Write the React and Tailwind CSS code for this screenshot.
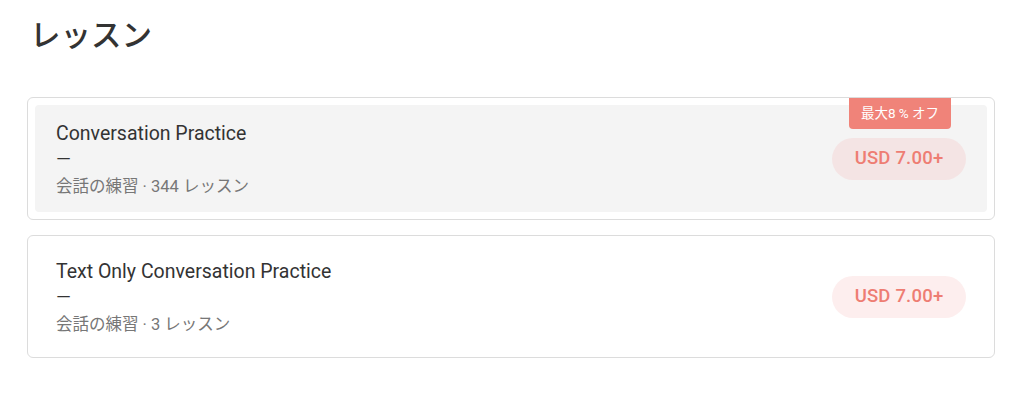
import React from 'react';

const lessons = [
  { title: 'Conversation Practice', category: '会話の練習', count: 344, price: 'USD 7.00+', discount: '最大8 % オフ', hovered: true },
  { title: 'Text Only Conversation Practice', category: '会話の練習', count: 3, price: 'USD 7.00+' },
];

const LessonCard = ({ lesson }) => (
  <div className="relative rounded-md border border-[#dcdcdc] bg-white p-[7px]">
    {lesson.discount && (
      <div className="absolute top-0 right-[43px] flex h-[31px] w-[102px] items-center justify-center rounded-b bg-[#f08379] text-[13.5px] text-white">
        {lesson.discount}
      </div>
    )}
    <div
      className={`flex h-[107px] items-center justify-between rounded px-[21px] ${
        lesson.hovered ? 'bg-[#f4f4f4]' : 'bg-white'
      }`}
    >
      <div className="flex flex-col pt-[4px]">
        <p className="text-[19.5px] leading-[26px] text-[#333]">{lesson.title}</p>
        <p className="text-[19px] leading-[24px] text-[#333]">—</p>
        <p className="mt-[3px] text-[16.5px] leading-[26px] text-[#777]">
          {lesson.category} · {lesson.count} レッスン
        </p>
      </div>
      <div
        className={`flex h-[42px] w-[134px] items-center justify-center rounded-full text-[18.5px] font-medium tracking-[0.2px] text-[#ee7d73] ${
          lesson.hovered ? 'bg-[#f4e4e4]' : 'bg-[#fdeeee]'
        }`}
      >
        {lesson.price}
      </div>
    </div>
  </div>
);

export default function App() {
  return (
    <div
      className="min-h-screen w-[1024px] bg-white px-[27px] pt-[14px]"
      style={{ fontFamily: 'Roboto, "Noto Sans CJK JP", sans-serif' }}
    >
      <h1 className="pl-[3px] text-[30.5px] font-medium leading-[44px] text-[#333]">レッスン</h1>
      <div className="mt-[39px] flex w-[968px] flex-col gap-[15px]">
        {lessons.map((lesson) => (
          <LessonCard key={lesson.title} lesson={lesson} />
        ))}
      </div>
    </div>
  );
}
